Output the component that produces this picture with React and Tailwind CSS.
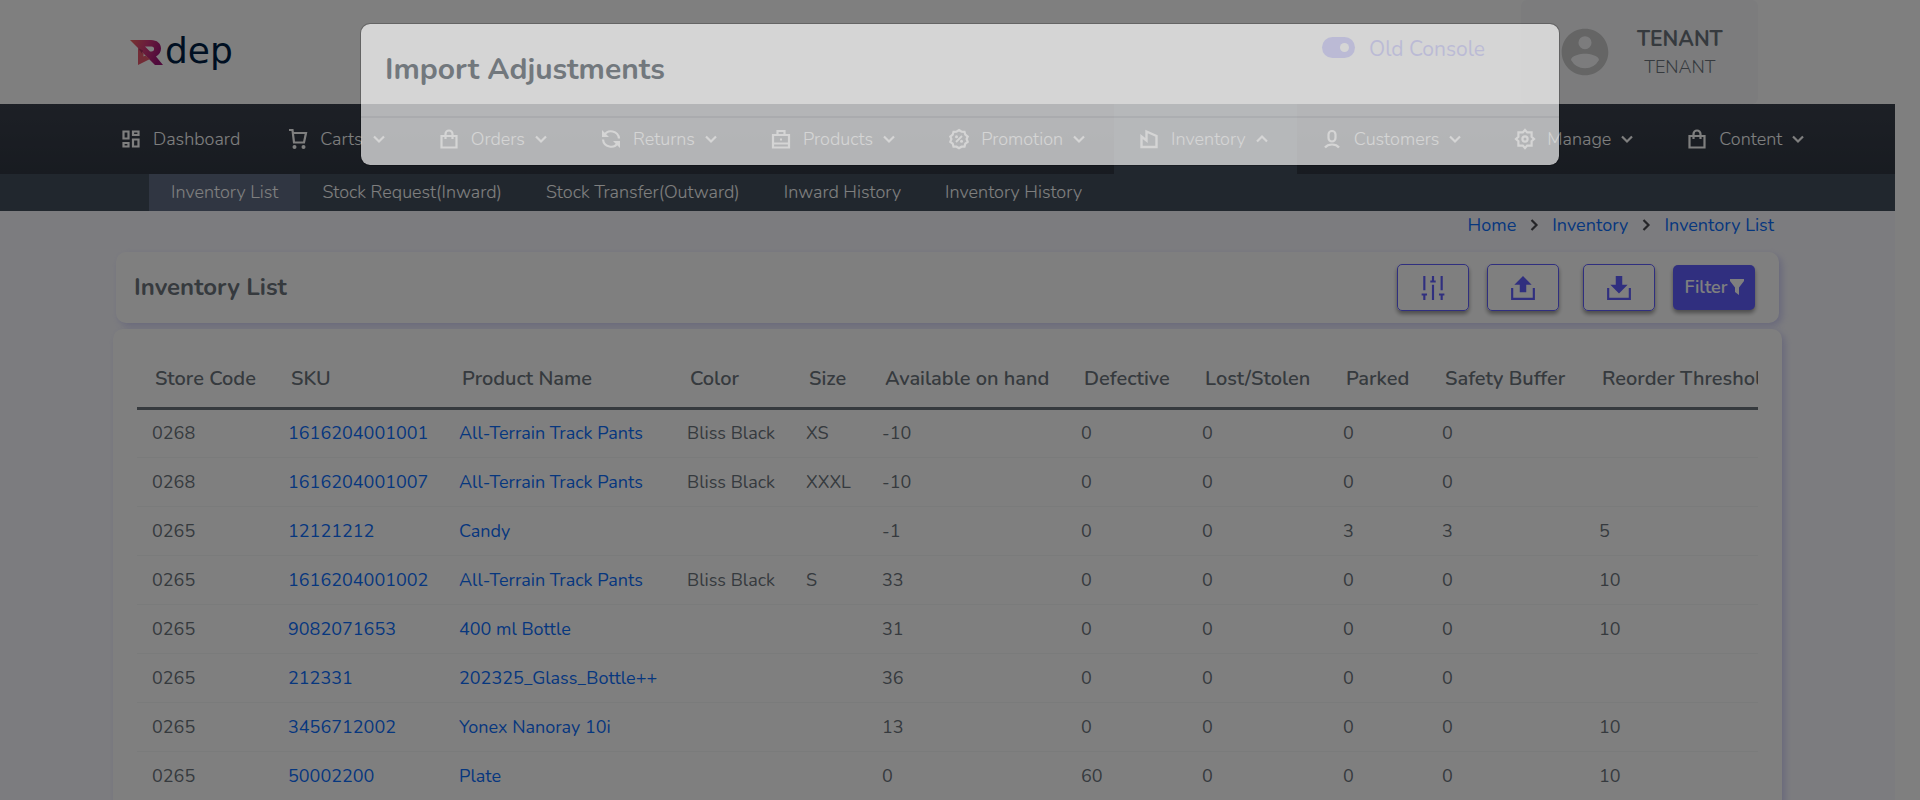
const Icon = ({ children }) => (
  <svg viewBox="0 0 24 24" className="size-6 shrink-0" fill="none" stroke="currentColor" strokeWidth="2.200" aria-hidden="true">
    {children}
  </svg>
);

const icons = {
  dashboard: <path d="M4.500 4.500h5v7h-5zM14 4.500h5.500v3.500H14zM14 12.500h5.500v7H14zM4.500 16h5v3.500h-5z" />,
  cart: (
    <>
      <path d="M3 3h3.500l1.500 12.500H18l2-9.500H7" />
      <circle cx="8.500" cy="20" r="2" fill="currentColor" stroke="none" />
      <circle cx="17.500" cy="20" r="2" fill="currentColor" stroke="none" />
    </>
  ),
  bag: (
    <>
      <path d="M4.500 9h15v11.500h-15z" />
      <path d="M8.500 12V7a3.500 3.500 0 0 1 7 0v5" />
    </>
  ),
  refresh: (
    <>
      <path d="M5 8.500a8 8 0 0 1 15 3M19 15.500a8 8 0 0 1-15-3" />
      <path d="M3 3v7h7zM21 21v-7h-7z" fill="currentColor" stroke="none" />
    </>
  ),
  products: (
    <>
      <path d="M4 8h16v12.500H4zM4 16.500h16M8.500 8V4h7v4" />
      <path d="M11 11.500h2v2h-2z" fill="currentColor" stroke="none" />
    </>
  ),
  promotion: (
    <>
      <path d="M12 3l2.500 1.700 3 .1.800 2.900 2.400 1.900-1.100 2.400 1.100 2.800-2.400 1.900-.8 2.900-3 .1L12 21.300l-2.500-1.600-3-.1-.8-2.900-2.400-1.900L4.400 12 3.300 9.600l2.400-1.900.8-2.900 3-.1z" />
      <path d="M15 9l-6 6" strokeWidth="1.800" />
      <circle cx="9.500" cy="9.700" r="1.500" fill="currentColor" stroke="none" />
      <circle cx="14.500" cy="14.300" r="1.500" fill="currentColor" stroke="none" />
    </>
  ),
  inventory: <path d="M4.500 20V9.500l5 4V4.500L19.500 9v11z" strokeWidth="2.400" />,
  customer: (
    <>
      <rect x="8.500" y="4" width="7" height="10.500" rx="3.500" />
      <path d="M5 20.500c1.500-2 4-3 7-3s5.500 1 7 3" />
    </>
  ),
  gear: (
    <>
      <path d="M12 3l2.200 2.400h4.400v4.400L21 12l-2.400 2.200v4.400h-4.400L12 21l-2.200-2.400H5.400v-4.400L3 12l2.400-2.200V5.400h4.400z" />
      <circle cx="12" cy="12" r="2.600" />
    </>
  ),
};

const nav = [
  ["Dashboard", "dashboard"],
  ["Carts", "cart"],
  ["Orders", "bag"],
  ["Returns", "refresh"],
  ["Products", "products"],
  ["Promotion", "promotion"],
  ["Inventory", "inventory"],
  ["Customers", "customer"],
  ["Manage", "gear"],
  ["Content", "bag"],
];

const subnav = ["Inventory List", "Stock Request(Inward)", "Stock Transfer(Outward)", "Inward History", "Inventory History"];

const columns = [
  ["Store Code", "w-[136px]"],
  ["SKU", "w-[171px]"],
  ["Product Name", "w-[228px]"],
  ["Color", "w-[119px]"],
  ["Size", "w-[76px]"],
  ["Available on hand", "w-[199px]"],
  ["Defective", "w-[121px]"],
  ["Lost/Stolen", "w-[141px]"],
  ["Parked", "w-[99px]"],
  ["Safety Buffer", "w-[157px]"],
  ["Reorder Threshold", "w-[200px]"],
];

const rows = [
  ["0268", "1616204001001", "All-Terrain Track Pants", "Bliss Black", "XS", "-10", "0", "0", "0", "0", ""],
  ["0268", "1616204001007", "All-Terrain Track Pants", "Bliss Black", "XXXL", "-10", "0", "0", "0", "0", ""],
  ["0265", "12121212", "Candy", "", "", "-1", "0", "0", "3", "3", "5"],
  ["0265", "1616204001002", "All-Terrain Track Pants", "Bliss Black", "S", "33", "0", "0", "0", "0", "10"],
  ["0265", "9082071653", "400 ml Bottle", "", "", "31", "0", "0", "0", "0", "10"],
  ["0265", "212331", "202325_Glass_Bottle++", "", "", "36", "0", "0", "0", "0", ""],
  ["0265", "3456712002", "Yonex Nanoray 10i", "", "", "13", "0", "0", "0", "0", "10"],
  ["0265", "50002200", "Plate", "", "", "0", "60", "0", "0", "0", "10"],
];

function Chevron({ up }) {
  return (
    <svg viewBox="0 0 24 24" className="ml-1 size-6 shrink-0" fill="none" stroke="currentColor" strokeWidth="2.200" aria-hidden="true">
      <path d={up ? "M7 14.500l5-5 5 5" : "M7 9.500l5 5 5-5"} />
    </svg>
  );
}

function Logo() {
  return (
    <a href="#home" className="flex items-center gap-0.5 text-[#001f45]">
      <svg viewBox="0 0 33 25" className="h-[25px] w-[33px]" aria-hidden="true">
        <defs>
          <linearGradient id="mark" x1="0" y1="0" x2="1" y2="0.300">
            <stop offset="0" stopColor="#ee6a5f" />
            <stop offset="0.500" stopColor="#d63a78" />
            <stop offset="1" stopColor="#a01478" />
          </linearGradient>
        </defs>
        <path
          fill="url(#mark)"
          fillRule="evenodd"
          d="M0 0H21C27 0 31 3.500 31 8.500C31 12 29 15 26 16.500L33 25H25L16 16L8 8ZM15 6.500L20 11.500H21.500C25 11.500 25 6.500 21.500 6.500Z"
        />
        <path fill="#e4586c" d="M8 8L16 16L20 19L8 25Z" />
        <path fill="#a8305c" d="M8 8L13 10.500L12 13.500Z" />
        <path fill="#fff" d="M13.500 14l2 1.500-2 1z" />
      </svg>
      <span className="pb-0.5 font-[DejaVu_Sans,sans-serif] text-[36px] leading-9">dep</span>
    </a>
  );
}

function ToolButton({ label, className, children }) {
  return (
    <button
      aria-label={label}
      className={"flex h-[47px] w-[72px] items-center justify-center rounded-[5px] border border-indigo-500 text-indigo-500 shadow-[0_3px_4px_rgba(0,0,0,0.4)] " + className}
    >
      <svg viewBox="0 0 24 24" className="size-[26px]" fill="none" stroke="currentColor" strokeWidth="2" aria-hidden="true">
        {children}
      </svg>
    </button>
  );
}

function Separator() {
  return (
    <svg viewBox="0 0 12 12" className="mx-3 size-3" fill="none" stroke="#4b4b50" strokeWidth="2.200" aria-hidden="true">
      <path d="M3.500 1l5 5-5 5" />
    </svg>
  );
}

export default function App() {
  return (
    <div className="relative min-h-screen overflow-hidden bg-white font-[Nunito,Lato,sans-serif] text-[18px] leading-6 text-[#6c757d]">
      <header className="flex h-[104px] items-center bg-white pr-[162px] pl-[130px]">
        <Logo />
        <label className="mr-9 mb-1.5 ml-auto flex items-center gap-3.5 text-[21px] text-indigo-500">
          <input
            type="checkbox"
            defaultChecked
            className="mb-1 h-[21px] w-[33px] appearance-none rounded-full bg-indigo-500 p-1.5 before:ml-auto before:block before:size-[9px] before:rounded-full before:bg-white"
          />
          Old Console
        </label>
        <div className="flex h-full w-[237px] items-center rounded-md bg-[#f8f9fb] pl-9">
          <svg viewBox="0 0 24 24" className="size-14 shrink-0 text-[#cacaca]" fill="currentColor" aria-hidden="true">
            <path d="M12 2C6.480 2 2 6.480 2 12s4.480 10 10 10 10-4.480 10-10S17.520 2 12 2zm0 3.200a2.800 2.800 0 1 1 0 5.600 2.800 2.800 0 0 1 0-5.600zm0 13.800a7.200 7.200 0 0 1-6-3.600c.2-1.800 4-2.600 6-2.600s5.800.8 6 2.600A7.200 7.200 0 0 1 12 19z" />
          </svg>
          <div className="ml-6 pt-0.5 text-center">
            <p className="text-[21px] leading-7 font-bold">TENANT</p>
            <p className="leading-7 font-light">TENANT</p>
          </div>
        </div>
      </header>

      <div className="mr-[25px] min-h-[696px] bg-[#f9f9ff]">
        <nav className="flex h-[70px] bg-linear-to-b from-[#3a404c] to-[#303742] pl-24 font-light text-white">
          {nav.map(([label, icon]) => (
            <a
              key={label}
              href={"#" + label.toLowerCase()}
              className={"flex items-center px-[23px] whitespace-nowrap " + (label === "Inventory" ? "bg-[#434f5d]" : "")}
            >
              <Icon>{icons[icon]}</Icon>
              <span className="ml-2.5">{label}</span>
              {label !== "Dashboard" && <Chevron up={label === "Inventory"} />}
            </a>
          ))}
        </nav>
        <nav className="flex h-[37px] bg-[#434f5d] pl-[149px] font-light text-white">
          {subnav.map((label, i) => (
            <a
              key={label}
              href="#section"
              className={"flex items-center px-[22px] pb-0.5 whitespace-nowrap " + (i === 0 ? "bg-[#606c84]" : "")}
            >
              {label}
            </a>
          ))}
        </nav>

        <main className="px-[113px]">
          <nav aria-label="Breadcrumb" className="flex h-7 items-center justify-end pr-2 text-[#0d6efd]">
            <a href="#home">Home</a>
            <Separator />
            <a href="#inventory">Inventory</a>
            <Separator />
            <a href="#list">Inventory List</a>
          </nav>

          <section className="mx-[3px] mt-[13px] flex h-[71px] items-center rounded-[10px] bg-white pr-6 pl-[18px] shadow-[3px_3px_7px_rgba(120,120,230,0.3)]">
            <h1 className="mr-auto pb-0.5 text-[24px] leading-8 font-bold">Inventory List</h1>
            <ToolButton label="Adjust columns" className="mr-[18px]">
              <path d="M4 1v13M1.500 18h5M4 18v5M12 9v14M9.500 6h5M12 1v5M20 1v13M17.500 18h5M20 18v5" />
            </ToolButton>
            <ToolButton label="Import" className="mr-6">
              <path d="M2 12v10h20V12" />
              <path d="M12 1l8 8h-5v7H9V9H4z" fill="currentColor" stroke="none" />
            </ToolButton>
            <ToolButton label="Export" className="mr-[18px]">
              <path d="M2 12v10h20V12" />
              <path d="M12 17L4 9h5V1h6v8h5z" fill="currentColor" stroke="none" />
            </ToolButton>
            <button className="flex h-[45px] w-[82px] items-center justify-center gap-0.5 rounded-[5px] bg-indigo-500 pb-0.5 font-semibold text-white shadow-[0_3px_4px_rgba(0,0,0,0.4)]">
              Filter
              <svg viewBox="0 0 14 16" className="h-4 w-3.5" fill="currentColor" aria-hidden="true">
                <path d="M0 0h14v2L9 8.500V16l-4-3V8.500L0 2z" />
              </svg>
            </button>
          </section>

          <section className="mt-1.5 rounded-[10px] bg-white px-6 pt-[22px] pb-6 shadow-[3px_3px_7px_rgba(120,120,230,0.3)]">
            <div className="overflow-x-auto">
              <table className="w-full min-w-[1647px] table-fixed border-collapse text-left">
                <thead>
                  <tr className="h-[57px] border-b-[3px] border-[#6c757d]">
                    {columns.map(([label, width]) => (
                      <th key={label} className={"px-[18px] py-0 text-[20px] font-semibold whitespace-nowrap " + width}>
                        {label}
                      </th>
                    ))}
                  </tr>
                </thead>
                <tbody>
                  {rows.map((row) => (
                    <tr key={row[1]} className="h-[49px] border-b border-[#f5f6f7]">
                      {row.map((cell, i) => (
                        <td key={i} className="py-0 pl-[15px] whitespace-nowrap">
                          {i === 1 || i === 2 ? (
                            <a href="#item" className="text-[#0d6efd]">
                              {cell}
                            </a>
                          ) : (
                            cell
                          )}
                        </td>
                      ))}
                    </tr>
                  ))}
                </tbody>
              </table>
            </div>
          </section>
        </main>
      </div>

      <div className="absolute inset-0 flex items-start justify-center bg-black/50 px-6 pt-[23px]">
        <div
          role="dialog"
          aria-label="Import Adjustments"
          className="w-full max-w-[1200px] rounded-[10px] border border-black/30 bg-white bg-clip-padding opacity-67"
        >
          <div className="flex h-[94px] items-center border-b-2 border-[#f0f0f1] px-6">
            <h2 className="text-[30px] leading-10 font-bold">Import Adjustments</h2>
          </div>
          <div className="h-[47px]" />
        </div>
      </div>
    </div>
  );
}
